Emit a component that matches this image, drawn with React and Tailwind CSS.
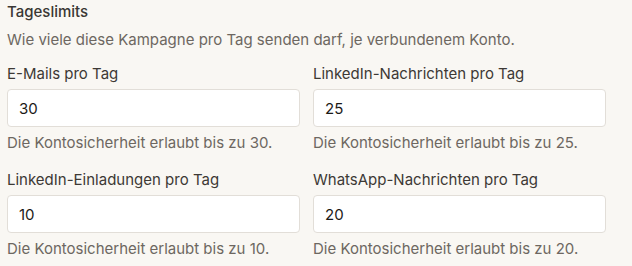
import React from "react";

const fields = [
  { label: "E-Mails pro Tag", value: "30" },
  { label: "LinkedIn-Nachrichten pro Tag", value: "25" },
  { label: "LinkedIn-Einladungen pro Tag", value: "10" },
  { label: "WhatsApp-Nachrichten pro Tag", value: "20" },
];

const LimitField = ({ label, value }) => (
  <div className="flex flex-col">
    <label className="text-[15px] leading-5 text-[#3d3935] mb-[5px]">{label}</label>
    <input
      readOnly
      value={value}
      className="h-[38px] w-full rounded-[4px] border border-[#e2ded8] bg-white px-[11px] text-[15px] text-[#1c1a18] outline-none"
    />
    <p className="mt-[6px] text-[15px] leading-5 text-[#6d6761]">
      Die Kontosicherheit erlaubt bis zu {value}.
    </p>
  </div>
);

export default function App() {
  return (
    <div
      className="min-h-[266px] w-[632px] bg-[#f9f7f3] pl-[7px] pt-[2px]"
      style={{ fontFamily: "Inter, 'Noto Sans', sans-serif" }}
    >
      <h3 className="text-[15px] leading-5 font-medium text-[#3a3734]">Tageslimits</h3>
      <p className="mt-[8px] text-[15px] leading-5 text-[#6d6761]">
        Wie viele diese Kampagne pro Tag senden darf, je verbundenem Konto.
      </p>
      <div className="mt-[14px] grid w-[599px] grid-cols-2 gap-x-[13px] gap-y-[17px]">
        {fields.map((f) => (
          <LimitField key={f.label} {...f} />
        ))}
      </div>
    </div>
  );
}
